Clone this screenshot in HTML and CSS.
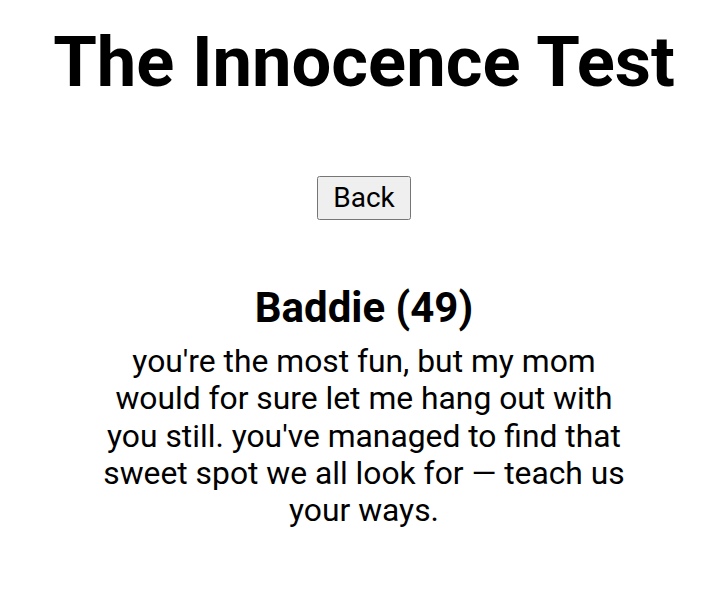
FILE: index.html
```html
<!DOCTYPE html>
<html lang="en">
<head>
    <meta charset="UTF-8">
    <meta name="viewport" content="width=device-width, initial-scale=1.0">
    <title>The Innocence Test</title>
    <link rel="stylesheet" href="styles.css">
</head>
<body>
    <h1 class="title">The Innocence Test</h1>

    <div class="backRow">
        <button class="backBtn">Back</button>
    </div>

    <!-- result of the test -->
    <div class="result">
        <h2>Baddie (49)</h2>
        <p>you're the most fun, but my mom would for sure let me hang out with you still. you've managed to find that sweet spot we all look for — teach us your ways.</p>
    </div>
</body>
</html>
```

FILE: styles.css
```css
body {
    margin: 0 0 0 9px;
    font-family: Roboto, "Liberation Sans", sans-serif;
    color: black;
    text-align: center;
}

.title {
    font-size: 70.5px;
    font-weight: 700;
    margin: 21px 0 0;
}

.backRow {
    margin-top: 73px;
}

.backBtn {
    font-family: Roboto, sans-serif;
    font-size: 28px;
    padding: 3px 14.5px 4px;
}

.result {
    width: 540px;
    margin: 63px auto 0;
}

.result h2 {
    font-size: 42px;
    margin: 0;
}

.result p {
    font-size: 31.8px;
    line-height: 37.3px;
    margin: 11px 0 0;
}
```
